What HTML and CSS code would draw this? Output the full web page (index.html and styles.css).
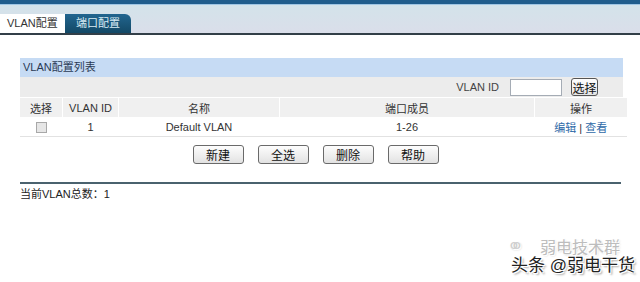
FILE: index.html
```html
<!DOCTYPE html>
<html lang="zh-CN">
<head>
    <meta charset="UTF-8">
    <title>VLAN配置</title>
    <link rel="stylesheet" href="styles.css">
</head>
<body>
    <div class="topbar"></div>

    <div class="tabbar">
        <a class="tab active" href="#vlan">VLAN配置</a>
        <a class="tab" href="#port">端口配置</a>
    </div>

    <div class="main">
        <div class="panel">
            <div class="panel-title">VLAN配置列表</div>
            <div class="search-row">
                <span class="search-label">VLAN ID</span>
                <input type="text" class="search-input">
                <button class="search-btn">选择</button>
            </div>
            <table class="vlan-table">
                <tr class="head">
                    <th class="col-check">选择</th>
                    <th class="col-id">VLAN ID</th>
                    <th class="col-name">名称</th>
                    <th class="col-ports">端口成员</th>
                    <th class="col-ops">操作</th>
                </tr>
                <tr>
                    <td><span class="check"></span></td>
                    <td>1</td>
                    <td>Default VLAN</td>
                    <td>1-26</td>
                    <td><a href="#edit">编辑</a> | <a href="#view">查看</a></td>
                </tr>
            </table>
        </div>

        <div class="actions">
            <button class="btn">新建</button>
            <button class="btn">全选</button>
            <button class="btn">删除</button>
            <button class="btn">帮助</button>
        </div>

        <div class="summary">当前VLAN总数：1</div>
    </div>

    <!-- watermark over the page -->
    <div class="watermark">
        <div class="wm-group"><span class="wm-icon">&#9901;</span>弱电技术群</div>
        <div class="wm-main">头条 @弱电干货</div>
    </div>
</body>
</html>
```

FILE: styles.css
```css
body {
    font-family: "Liberation Sans", "Noto Sans CJK SC", sans-serif;
    font-size: 11px;
    color: #333;
    background-color: #fff;
    margin: 0;
    position: relative;
    height: 282px;
    overflow: hidden;
}

button {
    font-family: "Liberation Sans", "Noto Sans CJK SC", sans-serif;
    font-size: 12px;
    white-space: nowrap;
    padding: 0;
    color: #111;
}

.topbar {
    height: 4px;
    background-color: #1f5d8c;
    border-bottom: 1px solid #9fc6e4;
}

.tabbar {
    height: 19px;
    padding-top: 9px;
    display: flex;
    background: linear-gradient(to bottom, #d3e3ea, #dadeea);
    border-bottom: 2px solid #323f48;
}

.tab {
    height: 19px;
    line-height: 19px;
    text-decoration: none;
    font-size: 11px;
}

.tab.active {
    background-color: #fff;
    color: #333;
    width: 58px;
    padding-left: 7px;
}

.tab:not(.active) {
    background: linear-gradient(to bottom, #22658f, #134966);
    color: #d8ecf5;
    border-top-right-radius: 6px;
    width: 66px;
    text-align: center;
}

.main {
    width: 603px;
    margin-left: 20px;
    padding-top: 23px;
}

.panel-title {
    height: 19px;
    line-height: 19px;
    padding-left: 3px;
    background-color: #c6dbf4;
    color: #2a3a55;
}

.search-row {
    height: 20px;
    background-color: #ececec;
    display: flex;
    align-items: center;
    justify-content: flex-end;
    padding-right: 25px;
}

.search-label {
    margin-right: 11px;
    color: #444;
}

.search-input {
    width: 48px;
    height: 13px;
    padding: 1px;
    border: 1px solid #a5acb5;
    margin: 0 9px 0 0;
}

.search-btn {
    width: 27px;
    height: 18px;
    border: 1px solid #555;
    border-radius: 3px;
    background: linear-gradient(to bottom, #fff, #e4e4e4);
}

.vlan-table {
    width: 603px;
    border-collapse: collapse;
    table-layout: fixed;
}

.vlan-table th {
    height: 19px;
    padding: 0;
    font-weight: normal;
    background-color: #f0f0f0;
    border-left: 1px solid #fff;
    border-top: 1px solid #fff;
    color: #333;
}

.vlan-table th:first-child {
    border-left: none;
}

.vlan-table td {
    height: 19px;
    padding: 0;
    text-align: center;
    border-bottom: 1px solid #e2e2e2;
}

.col-check { width: 42px; }
.col-id { width: 55px; }
.col-name { width: 160px; }
.col-ports { width: 254px; }
.col-ops { width: 92px; }

.check {
    display: inline-block;
    width: 9px;
    height: 9px;
    border: 1px solid #a8a8a8;
    background-color: #e6e6e6;
    vertical-align: middle;
}

.vlan-table a {
    color: #2f6aa8;
    text-decoration: none;
}

.actions {
    display: flex;
    justify-content: center;
    gap: 14px;
    margin-top: 8px;
    padding-right: 12px;
}

.btn {
    width: 51px;
    height: 19px;
    border: 1px solid #6a6a6a;
    border-radius: 3px;
    background: linear-gradient(to bottom, #fdfdfd, #e2e2e2);
}

.summary {
    margin-top: 18px;
    border-top: 2px solid #4a626e;
    padding-top: 3px;
    line-height: 14px;
    color: #222;
    width: 601px;
}

.watermark {
    position: absolute;
    right: 5px;
    bottom: 6px;
    text-align: right;
}

.wm-group {
    font-size: 16px;
    color: #bdbdbd;
    margin-right: 15px;
    line-height: 17px;
    text-shadow: 1px 1px 0 #fff, -1px -1px 0 #fff, 1px 1px 2px #ccc;
}

.wm-icon {
    color: #d0d0d0;
    font-size: 20px;
    margin-right: 16px;
}

.wm-main {
    font-size: 17px;
    color: #222;
    line-height: 20px;
    text-shadow: 1px 1px 0 #fff, -1px -1px 0 #fff, 1px -1px 0 #fff, -1px 1px 0 #fff, 2px 2px 2px #999;
}
```
